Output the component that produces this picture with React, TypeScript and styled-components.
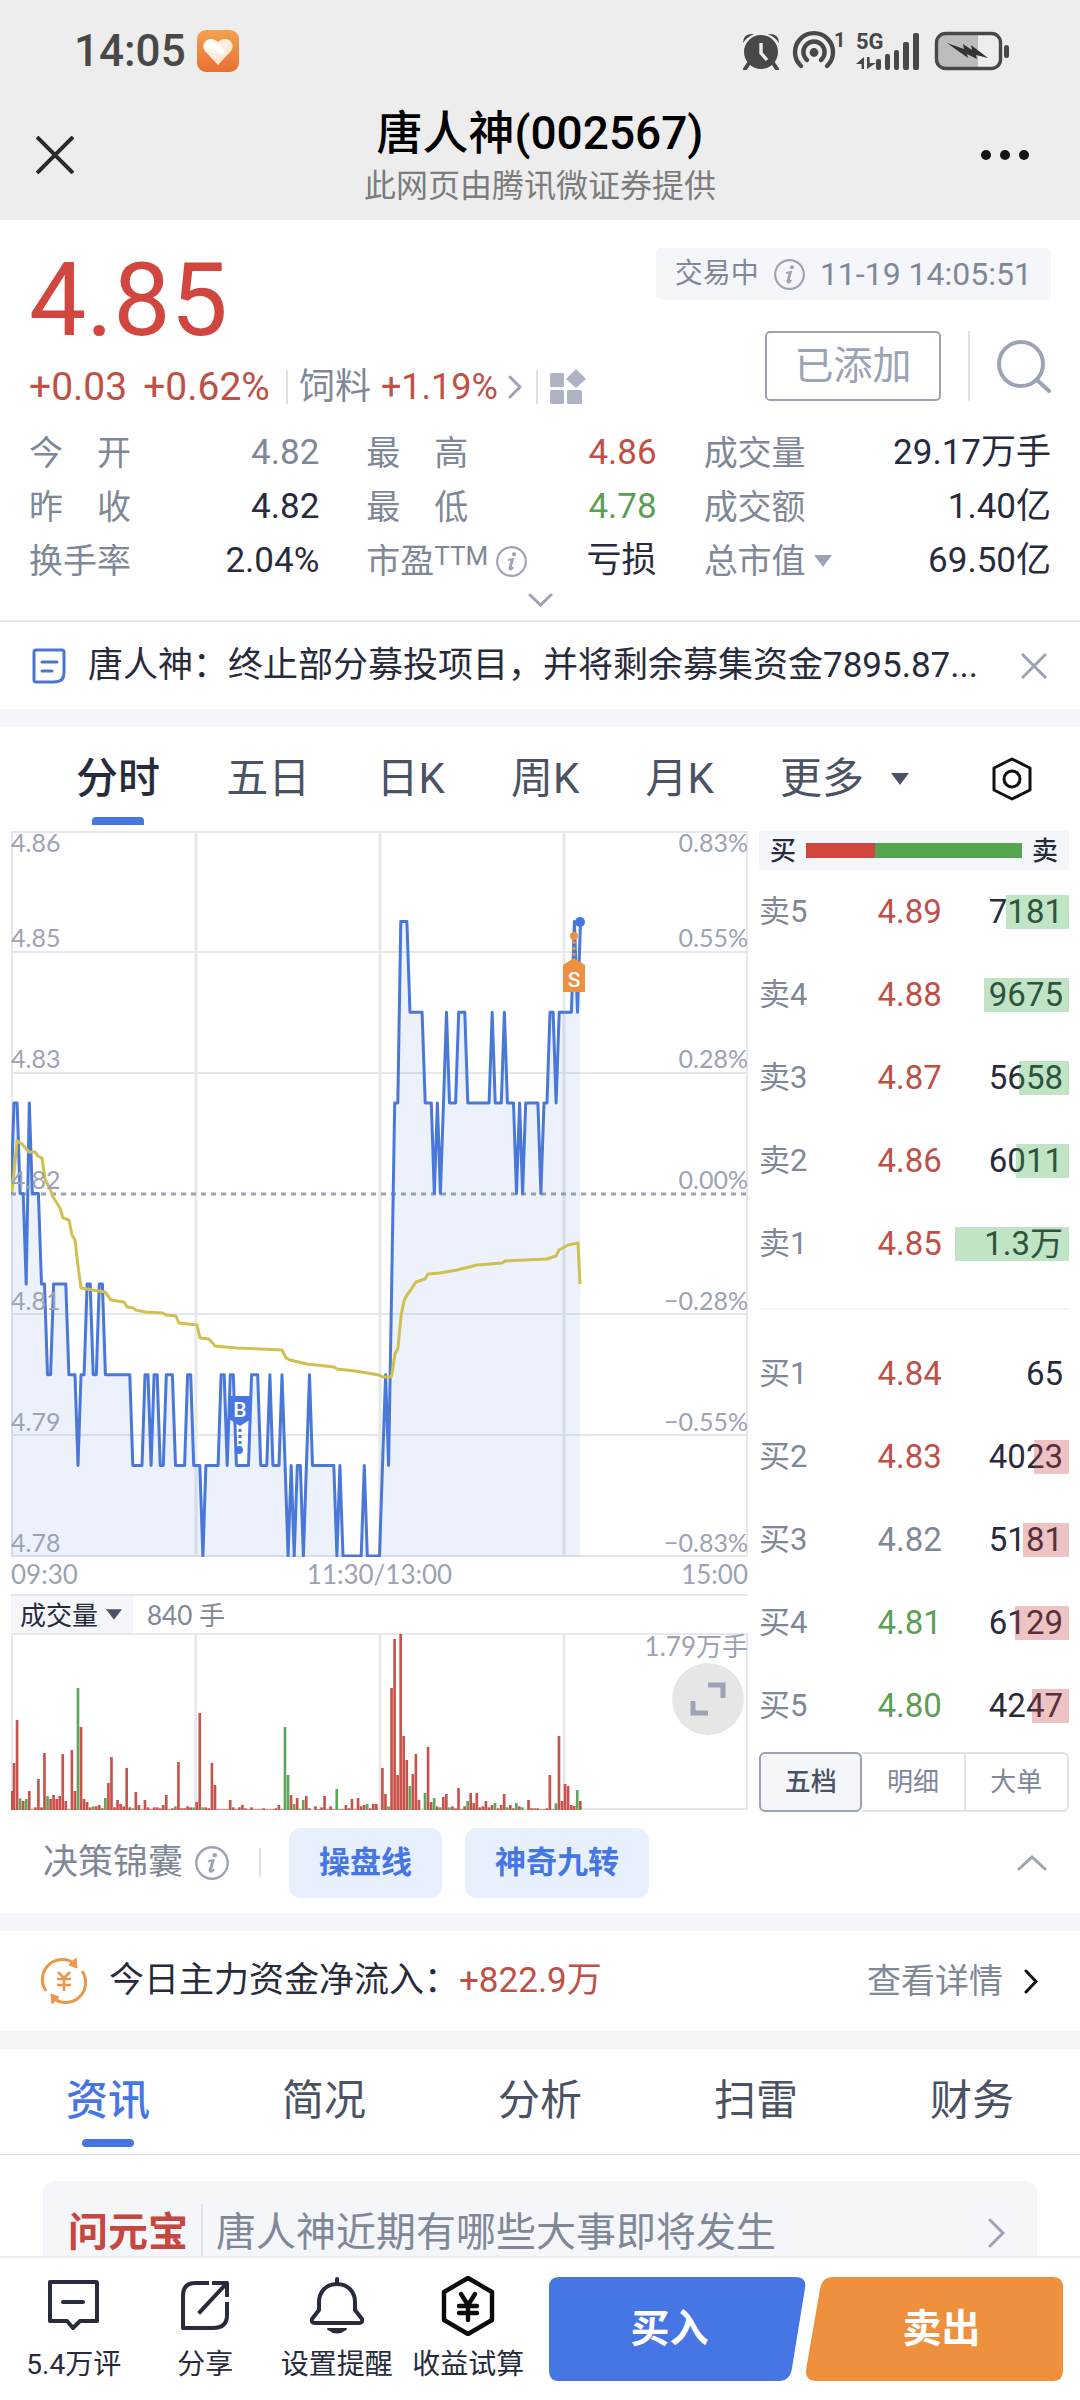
import React from "react";
import styled, { createGlobalStyle, css } from "styled-components";

const color = {
  ink: "#272b3c",
  slate: "#4a5263",
  muted: "#808898",
  soft: "#9ba3b4",
  line: "#e6e8ec",
  panel: "#f4f6fa",
  red: "#c05046",
  green: "#5a9f54",
  blue: "#4576e4",
  orange: "#ee903e",
};

const GlobalStyle = createGlobalStyle`
  *, *::before, *::after { box-sizing: border-box; }
  body {
    margin: 0;
    background: #fff;
    color: ${color.ink};
    font-family: Roboto, "Noto Sans CJK SC", sans-serif;
    font-size: 35px;
    line-height: 54px;
  }
  h1, p, dl, dd, dt { margin: 0; font-weight: 400; }
  button {
    margin: 0; padding: 0; border: 0; background: none;
    color: inherit; font: inherit; cursor: pointer;
  }
  a { color: inherit; text-decoration: none; }
  svg { display: block; flex: none; }
`;

/* ---------- page frame ---------- */

const Page = styled.div`
  height: 100vh;
  display: flex;
  flex-direction: column;
`;
const Scroll = styled.main`
  flex: 1;
  min-height: 0;
  overflow-y: auto;
  scrollbar-width: none;
`;
const Band = styled.div`
  height: 18px;
  background: ${color.panel};
`;
const Rule = styled.span<{ $h: number }>`
  flex: none;
  width: 2px;
  height: ${(p) => p.$h}px;
  background: #dfe1e7;
`;

/* ---------- top bars ---------- */

const TopBar = styled.header`
  flex: none;
  background: #ededed;
`;
const StatusBar = styled.div`
  height: 102px;
  padding: 0 70px 0 74px;
  display: flex;
  align-items: center;
  color: #484848;
`;
const Clock = styled.span`
  font-size: 44px;
  font-weight: 500;
  margin-right: 11px;
`;
const StatusIcons = styled.div`
  margin-left: auto;
  display: flex;
  align-items: center;
  gap: 10px;
`;
const TitleBar = styled.div`
  padding: 0 36px 12px;
  display: grid;
  grid-template-columns: 64px 1fr 64px;
  align-items: center;
  justify-items: start;
`;
const TitleText = styled.div`
  justify-self: center;
  text-align: center;
`;
const Title = styled.h1`
  color: #000;
  font-size: 46px;
  font-weight: 500;
  line-height: 62px;
`;
const Subtitle = styled.p`
  color: #7c7c7c;
  font-size: 32px;
  line-height: 44px;
`;
const IconButton = styled.button`
  display: flex;
  align-items: center;
  justify-content: center;
`;

/* ---------- quote ---------- */

const Quote = styled.section`
  padding: 28px 29px 0;
  border-bottom: 2px solid ${color.line};
`;
const QuoteHead = styled.div`
  display: flex;
  justify-content: space-between;
`;
const Price = styled.div`
  color: #d1473f;
  font-size: 102px;
  line-height: 104px;
`;
const Changes = styled.div`
  margin-top: 8px;
  height: 54px;
  display: flex;
  align-items: center;
`;
const Change = styled.span`
  color: ${color.red};
  font-size: 39px;
  margin-right: 16px;
`;
const Sector = styled.a`
  display: flex;
  align-items: center;
  gap: 10px;
  margin: 0 14px 0 11px;
  color: ${color.muted};
  font-size: 36px;
`;
const Up = styled.span`
  color: ${color.red};
`;
const QuoteSide = styled.div`
  display: flex;
  flex-direction: column;
  align-items: flex-end;
  gap: 31px;
`;
const TradeState = styled.div`
  height: 52px;
  padding: 0 19px;
  display: flex;
  align-items: center;
  gap: 15px;
  border-radius: 5px;
  background: ${color.panel};
  color: ${color.muted};
  font-size: 28px;
`;
const Stamp = styled.time`
  font-size: 32px;
`;
const Actions = styled.div`
  display: flex;
  align-items: center;
  gap: 27px;
`;
const AddedButton = styled.button`
  width: 176px;
  height: 70px;
  border: 2px solid ${color.soft};
  border-radius: 5px;
  color: ${color.soft};
  font-size: 39px;
`;
const Stats = styled.dl`
  margin-top: 12px;
  display: grid;
  grid-template-columns: 290fr 290fr 347fr;
  column-gap: 47px;
`;
const Stat = styled.div`
  display: flex;
  justify-content: space-between;
`;
const StatName = styled.dt`
  min-width: 102px;
  display: flex;
  align-items: center;
  justify-content: space-between;
  gap: 8px;
  color: ${color.muted};
  font-size: 34px;
`;
const Upper = styled.span`
  font-size: 26px;
  line-height: 34px;
  vertical-align: 8px;
`;
const StatValue = styled.dd<{ $tone?: string }>`
  color: ${(p) => p.$tone ?? color.ink};
`;
const Unfold = styled.button`
  width: 100%;
  height: 32px;
  display: flex;
  align-items: center;
  justify-content: center;
  padding-bottom: 8px;
`;

const News = styled.section`
  height: 87px;
  padding: 0 33px 0 32px;
  display: flex;
  align-items: center;
  gap: 22px;
`;
const NewsLink = styled.a`
  flex: 1;
  min-width: 0;
  white-space: nowrap;
  overflow: hidden;
`;

/* ---------- chart section ---------- */

const ChartTabs = styled.nav`
  height: 104px;
  padding: 0 48px 0 76px;
  display: flex;
  align-items: center;
  gap: 26px;
`;
const TabSet = styled.div`
  flex: 788;
  display: flex;
  justify-content: space-between;
`;
const TabTail = styled.div`
  flex: 142;
  display: flex;
  align-items: center;
  justify-content: space-between;
`;
const activeTab = css<{ $bar: string }>`
  font-weight: 500;
  &::after {
    content: "";
    position: absolute;
    left: 50%;
    bottom: 0;
    width: 52px;
    height: 8px;
    margin-left: -26px;
    border-radius: ${(p) => p.$bar};
    background: ${color.blue};
  }
`;
const Tab = styled.button<{ $on?: boolean; $bar: string; $tint: string }>`
  position: relative;
  height: 92px;
  color: ${(p) => (p.$on ? p.$tint : color.slate)};
  font-size: 42px;
  ${(p) => p.$on && activeTab}
`;
const Board = styled.div`
  padding: 0 11px;
  display: grid;
  grid-template-columns: 737fr 310fr;
  column-gap: 11px;
`;
const Plot = styled.div<{ $h: number }>`
  position: relative;
  height: ${(p) => p.$h}px;
  > svg { width: 100%; height: 100%; }
`;
const Scale = styled.div`
  position: absolute;
  inset: 0;
  display: grid;
  grid-template-rows: repeat(6, 1fr);
  color: ${color.soft};
  font: 25px/22px Lato, sans-serif;
`;
const ScaleStep = styled.div`
  display: flex;
  flex-direction: column;
  justify-content: flex-end;
  padding-bottom: 4px;
  &:first-child { justify-content: space-between; }
`;
const ScaleLine = styled.div`
  display: flex;
  justify-content: space-between;
`;
const TimeAxis = styled.div`
  height: 39px;
  display: flex;
  justify-content: space-between;
  border-bottom: 2px solid ${color.line};
  color: ${color.soft};
  font: 26px/34px Lato, sans-serif;
`;
const VolumeHead = styled.div`
  height: 37px;
  display: flex;
  align-items: center;
  gap: 14px;
  color: ${color.muted};
  font: 26px/34px Lato, "Noto Sans CJK SC", sans-serif;
`;
const VolumePick = styled.button`
  height: 37px;
  padding: 0 11px 0 9px;
  display: flex;
  align-items: center;
  gap: 8px;
  background: ${color.panel};
  color: ${color.ink};
`;
const VolumePeak = styled.span`
  position: absolute;
  top: 0;
  right: 0;
  color: ${color.soft};
  font: 26px/26px Lato, "Noto Sans CJK SC", sans-serif;
`;
const ExpandButton = styled(IconButton)`
  position: absolute;
  top: 30px;
  right: 4px;
  width: 72px;
  height: 72px;
  border-radius: 50%;
  background: #e6e6e6;
`;

/* ---------- order book ---------- */

const Ratio = styled.div`
  height: 39px;
  padding: 0 11px;
  display: flex;
  align-items: center;
  gap: 10px;
  background: ${color.panel};
  font-size: 26px;
  font-weight: 500;
`;
const RatioBar = styled.div`
  flex: 1;
  height: 15px;
  display: flex;
`;
const RatioPart = styled.span<{ $share: number; $fill: string }>`
  flex: ${(p) => p.$share};
  background: ${(p) => p.$fill};
`;
const Levels = styled.table`
  width: 100%;
  table-layout: fixed;
  border-collapse: collapse;
  margin-bottom: 23px;
  & + & {
    border-top: 2px solid ${color.panel};
    margin-bottom: 5px;
  }
  & + & tr:first-child > * { padding-top: 23px; height: 106px; }
`;
const LevelName = styled.th`
  width: 25%;
  height: 83px;
  padding: 0;
  text-align: left;
  font-weight: 400;
  font-size: 31px;
  line-height: 34px;
  color: ${color.muted};
`;
const LevelPrice = styled.td<{ $tone: string }>`
  width: 34%;
  padding: 0;
  text-align: right;
  font-size: 33px;
  line-height: 34px;
  color: ${(p) => p.$tone};
`;
const LevelSize = styled.td`
  padding: 0;
  font-size: 33px;
  line-height: 34px;
  text-align: right;
`;
const SizeCell = styled.div`
  position: relative;
  padding-right: 6px;
`;
const Depth = styled.span<{ $fill: string }>`
  position: absolute;
  top: 0;
  right: 0;
  height: 34px;
  background: ${(p) => p.$fill};
`;
const BookTabs = styled.div`
  display: grid;
  grid-template-columns: repeat(3, 1fr);
`;
const BookTab = styled.button<{ $on?: boolean }>`
  height: 60px;
  border: 2px solid ${(p) => (p.$on ? color.soft : "#e1e3e8")};
  border-left-width: ${(p) => (p.$on ? 2 : 0)}px;
  border-radius: ${(p) => (p.$on ? "6px" : "0")};
  background: ${(p) => (p.$on ? color.panel : "none")};
  color: ${(p) => (p.$on ? color.slate : color.muted)};
  font-size: 26px;
  font-weight: ${(p) => (p.$on ? 500 : 400)};
  line-height: 54px;
  &:last-child { border-radius: 0 6px 6px 0; }
`;

/* ---------- lower rows ---------- */

const Toolkit = styled.div`
  height: 101px;
  padding: 0 33px 0 43px;
  display: flex;
  align-items: center;
`;
const ToolkitName = styled.span`
  margin-right: 12px;
  color: ${color.muted};
`;
const ToolkitPills = styled.div`
  margin: 0 auto 0 28px;
  display: flex;
  gap: 23px;
`;
const Pill = styled.button`
  height: 70px;
  padding: 0 30px;
  border-radius: 12px;
  background: #e8effd;
  color: ${color.blue};
  font-size: 31px;
  font-weight: 700;
`;
const Gap = styled.span`
  width: 30px;
`;
const FlowRow = styled.a`
  height: 100px;
  padding: 0 42px 0 40px;
  display: flex;
  align-items: center;
  gap: 21px;
`;
const FlowMore = styled.span`
  margin-left: auto;
  color: ${color.muted};
  font-size: 34px;
`;
const InfoTabs = styled.nav`
  height: 106px;
  padding-bottom: 2px;
  display: grid;
  grid-template-columns: repeat(5, 1fr);
  align-items: center;
  justify-items: center;
  border-bottom: 1px solid #dcdee3;
`;
const AskCard = styled.a`
  margin: 26px 43px;
  height: 104px;
  padding: 0 32px 0 25px;
  display: flex;
  align-items: center;
  gap: 13px;
  border-radius: 12px;
  background: ${color.panel};
  color: ${color.muted};
  font-size: 40px;
`;
const AskBrand = styled.strong`
  color: #c6473f;
  font-weight: 700;
`;
const AskText = styled.span`
  flex: 1;
`;

/* ---------- bottom bar ---------- */

const BottomBar = styled.footer`
  flex: none;
  height: 144px;
  padding: 0 17px 0 8px;
  display: flex;
  gap: 15px;
  border-top: 2px solid #e9ebf0;
  background: #fff;
`;
const BottomTools = styled.div`
  flex: 526;
  display: grid;
  grid-template-columns: repeat(4, 1fr);
`;
const BottomTool = styled.button`
  padding-top: 18px;
  display: flex;
  flex-direction: column;
  align-items: center;
  gap: 9px;
  font-size: 28px;
  line-height: 40px;
  white-space: nowrap;
`;
const TradeButtons = styled.div`
  flex: 514;
  padding-top: 19px;
  display: grid;
  grid-template-columns: 1fr 1fr;
`;
const TradeButton = styled.button<{ $side: "buy" | "sell" }>`
  position: relative;
  height: 104px;
  padding: ${(p) => (p.$side === "buy" ? "0 16px 0 0" : "0 0 0 14px")};
  color: #fff;
  font-size: 39px;
  font-weight: 700;
  > svg { position: absolute; inset: 0; width: 100%; height: 100%; }
  > span { position: relative; }
`;

/* ---------- icons ---------- */

type ChevronProps = { w: number; h: number; dir: "right" | "down" | "up"; stroke?: string; weight?: number };
const Chevron = ({ w, h, dir, stroke = color.soft, weight = 3 }: ChevronProps) => {
  const d = {
    right: `M2 2 L${w - 2} ${h / 2} L2 ${h - 2}`,
    down: `M2 2 L${w / 2} ${h - 2} L${w - 2} 2`,
    up: `M2 ${h - 2} L${w / 2} 2 L${w - 2} ${h - 2}`,
  }[dir];
  return (
    <svg width={w} height={h} fill="none" stroke={stroke} strokeWidth={weight} strokeLinecap="round">
      <path d={d} />
    </svg>
  );
};

const Caret = ({ w, h, fill }: { w: number; h: number; fill: string }) => (
  <svg width={w} height={h} viewBox="0 0 18 12" fill={fill}>
    <path d="M0 0H18L9 12Z" />
  </svg>
);

const Cross = ({ size, stroke, weight }: { size: number; stroke: string; weight: number }) => (
  <svg width={size} height={size} viewBox={`0 0 ${size} ${size}`} stroke={stroke} strokeWidth={weight}>
    <path d={`M1 1 L${size - 1} ${size - 1} M${size - 1} 1 L1 ${size - 1}`} />
  </svg>
);

const Info = ({ size }: { size: number }) => (
  <svg width={size} height={size} viewBox="0 0 32 32" fill="none" stroke={color.soft}>
    <circle cx="16" cy="16" r="14.8" strokeWidth="2.2" />
    <circle cx="18.6" cy="8.6" r="2.1" fill={color.soft} stroke="none" />
    <path d="M12.4 14.4 L17.4 13.4 L14.4 23.4 Q14.2 24.8 16 23.8 L18 21.8" strokeWidth="2" />
    <path d="M16.8 14 L14 24" strokeWidth="2.8" />
  </svg>
);

const HeartBadge = () => (
  <svg width="42" height="42" viewBox="0 0 42 42">
    <defs>
      <linearGradient id="badge" x1="0" y1="0" x2="0" y2="1">
        <stop offset="0" stopColor="#f0a34e" />
        <stop offset="1" stopColor="#e96f33" />
      </linearGradient>
      <linearGradient id="heart" x1="0" y1="0" x2="1" y2="1">
        <stop offset="0" stopColor="#fff" />
        <stop offset="1" stopColor="#fbdcc0" />
      </linearGradient>
    </defs>
    <rect width="42" height="42" rx="9" fill="url(#badge)" />
    <path d="M21 35 L8 21 C2 13 13 4 21 12 C29 4 40 13 34 21 Z" fill="url(#heart)" />
    <path d="M11 15 Q15 14 24 21" stroke="#fff" strokeWidth="7" strokeLinecap="round" fill="none" />
  </svg>
);

const AlarmIcon = () => (
  <svg width="38" height="38" viewBox="0 0 38 38" fill="#484848">
    <circle cx="19" cy="20" r="17" />
    <path d="M1 11 Q1 1 12 2 Q5 5 1 11Z M37 11 Q37 1 26 2 Q33 5 37 11Z" />
    <path d="M7 31 L3 37 M31 31 L35 37" stroke="#484848" strokeWidth="4" strokeLinecap="round" />
    <path d="M19 11 V21 L25 28" fill="none" stroke="#ededed" strokeWidth="3.4" />
  </svg>
);

const HotspotIcon = () => (
  <svg width="56" height="50" viewBox="0 -5 56 50" fill="none" stroke="#484848" strokeWidth="4.4" strokeLinecap="round">
    <path d="M11 35 A19 19 0 1 1 37 35" />
    <path d="M17 29 A10.6 10.6 0 1 1 31 29" />
    <circle cx="24" cy="21.5" r="4.4" fill="#484848" stroke="none" />
    <text x="44" y="16" fontSize="20" fontWeight="700" fill="#484848" stroke="none">1</text>
  </svg>
);

const SignalIcon = () => (
  <svg width="68" height="50" viewBox="0 -5 68 50" fill="#484848">
    <text x="0" y="18" fontSize="22" fontWeight="700">5G</text>
    <path d="M8 26 V38 H5.600 V33 H0 Z M11 26 V38 L20 32 H13.600 V26Z" />
    <rect x="20" y="28" width="5" height="11" rx="2" />
    <rect x="29" y="23" width="5" height="16" rx="2" />
    <rect x="38" y="19" width="5" height="20" rx="2" />
    <rect x="47" y="11" width="6" height="28" rx="2" />
    <rect x="57" y="2" width="6" height="37" rx="2" />
  </svg>
);

const BatteryIcon = () => (
  <svg width="76" height="40" viewBox="0 0 76 40">
    <path d="M10 3 H44 V37 H10 Q3 37 3 30 V10 Q3 3 10 3Z" fill="#bdbdbd" />
    <rect x="2.500" y="2.500" width="64" height="35" rx="9" fill="none" stroke="#484848" strokeWidth="3.4" />
    <rect x="70" y="14" width="5" height="13" rx="2.5" fill="#484848" />
    <path d="M13 12 L30 18 L29 13 L38 19 L37 14 L54 27 L42 24 L43 28 L33 23 L34 27 Z" fill="#333" />
  </svg>
);

const BlocksIcon = () => (
  <svg width="37" height="36" viewBox="0 0 37 36" fill="#aeb4c3">
    <rect x="1" y="4" width="14" height="14" rx="1.500" />
    <rect x="1" y="21" width="14" height="14" rx="1.500" />
    <rect x="18" y="21" width="15" height="14" rx="1.500" />
    <path d="M27 0 L37 10 L27 19 L17 10Z" />
  </svg>
);

const SearchIcon = () => (
  <svg width="54" height="54" viewBox="0 0 54 54" fill="none" stroke={color.soft} strokeWidth="4" strokeLinecap="round">
    <circle cx="24" cy="25" r="22" />
    <path d="M40 41 L52 52" />
  </svg>
);

const NoteIcon = () => (
  <svg width="34" height="36" viewBox="0 0 34 36" fill="none" stroke="#4a76cf" strokeWidth="3" strokeLinecap="round">
    <path d="M4 2 H30 Q32 2 32 4 V25 Q32 34 22 34 H4 Q2 34 2 32 V4 Q2 2 4 2Z" />
    <path d="M10 14 H25 M10 23 H20" />
  </svg>
);

const HexSettings = () => (
  <svg width="40" height="44" viewBox="0 0 40 44" fill="none" stroke="#111" strokeWidth="3" strokeLinejoin="round">
    <path d="M20 2 L38 11 V33 L20 42 L2 33 V11Z" />
    <circle cx="20" cy="22" r="8" />
  </svg>
);

const ExpandIcon = () => (
  <svg width="36" height="36" viewBox="0 0 36 36" fill="none" stroke={color.soft} strokeWidth="5">
    <path d="M18 4 H33 V17 M3 20 V32 H18" />
  </svg>
);

const FlowIcon = () => (
  <svg width="48" height="50" viewBox="0 0 48 50" fill="none" stroke="#e8984a" strokeWidth="3">
    <path d="M6 35 A20 20 0 0 1 35 8 M42 15 A20 20 0 0 1 13 42" />
    <path d="M29 9 L36 2 L37 12Z M19 41 L12 48 L11 38Z" fill="#e8984a" strokeWidth="1" />
    <path d="M18 16 L24 22 L30 16 M17 23 H31 M17 29 H31 M24 22 V35" strokeWidth="2.6" />
  </svg>
);

const CommentIcon = () => (
  <svg width="60" height="60" viewBox="0 0 60 60" fill="none" stroke={color.ink} strokeWidth="4" strokeLinejoin="round" strokeLinecap="round">
    <path d="M6 6 H52 Q53 6 53 7 V45 H36 L29 52 L23 45 H6 Z" />
    <path d="M19 26 H39" />
  </svg>
);

const ShareIcon = () => (
  <svg width="60" height="60" viewBox="0 0 60 60" fill="none" stroke={color.ink} strokeWidth="4" strokeLinejoin="round">
    <path d="M34 7 H20 Q8 7 8 20 V52 H38 Q52 52 52 39 V26" />
    <path d="M39 7 H52 V19 M51 8 L25 36" strokeLinecap="square" />
  </svg>
);

const BellIcon = () => (
  <svg width="60" height="60" viewBox="0 0 60 60" fill="none" stroke={color.ink} strokeWidth="4" strokeLinejoin="round" strokeLinecap="round">
    <path d="M30 3 V7 M30 8 C18 8 12 17 12 26 V34 L5 43 Q4 47 8 47 H52 Q56 47 55 43 L48 34 V26 C48 17 42 8 30 8Z" />
    <path d="M21 53 H39 Q30 60 21 53Z" fill={color.ink} strokeWidth="2" />
  </svg>
);

const YuanIcon = () => (
  <svg width="60" height="60" viewBox="0 0 60 60" fill="none" stroke="#0c0c10" strokeWidth="4.4" strokeLinejoin="round" strokeLinecap="round">
    <path d="M30 2 L54 16 V44 L30 58 L6 44 V16Z" />
    <path d="M23 18 L30 29 L37 18 M21 30 H39 M21 37 H39 M30 29 V44" />
  </svg>
);

/* ---------- chart data ---------- */

/* one entry per run of minutes: [last price in cents above 4.00, minutes] */
const priceRuns: [number, number][] = [
  [82, 1], [83, 2], [82, 2], [81, 1], [83, 1], [82, 3], [81, 2], [80, 2], [81, 5], [80, 3], [79, 1], [80, 2],
  [81, 2], [80, 2], [81, 2], [80, 9], [79, 4], [80, 2], [79, 1], [80, 2], [79, 2], [80, 3], [79, 4], [80, 2],
  [79, 3], [78, 1], [79, 5], [80, 2], [79, 1], [80, 2], [79, 5], [80, 3], [79, 3], [80, 1], [79, 3], [80, 1],
  [79, 1], [78, 1], [79, 1], [78, 1], [79, 2], [78, 1], [79, 1], [80, 1], [79, 8], [78, 1], [79, 1], [78, 7],
  [79, 1], [78, 5], [79, 1], [80, 1], [79, 1], [81, 1], [83, 2], [85, 3], [84, 5], [83, 3], [82, 1], [83, 1],
  [82, 1], [83, 1], [84, 1], [83, 3], [84, 3], [83, 8], [84, 1], [83, 3], [84, 1], [83, 3], [82, 1], [83, 1],
  [82, 1], [83, 5], [82, 1], [83, 2], [84, 2], [83, 1], [84, 5], [85, 1], [84, 1], [85, 1],
];
const W = 737;
const H = 726;
const stepX = W / 242;
const prices = priceRuns.flatMap(([v, n]) => Array<number>(n).fill(v));
const pricePoints = prices.map((v, i) => `${(i * stepX).toFixed(1)},${(((86 - v) * (H - 1)) / 8).toFixed(1)}`).join(" ");
const lastX = (prices.length - 1) * stepX;

const averagePoints =
  "1,361 6,310 11,313 18,321 24,321 27,325 31,327 34,348 39,358 42,366 49,377 52,387 58,389 61,404 64,409 67,435 " +
  "70,457 81,459 94,461 100,469 113,471 116,476 122,477 125,479 134,481 152,482 155,484 165,485 168,492 186,494 " +
  "189,507 198,508 204,515 226,517 271,519 275,527 279,529 296,533 323,536 326,538 344,540 368,544 372,546 380,546 " +
  "381,543 384,523 387,517 390,485 393,470 396,464 399,460 405,451 414,448 417,443 429,442 446,439 466,434 491,432 " +
  "494,430 536,428 545,425 548,419 557,414 567,412 569,453";

/* traded volume per minute in chart units, negative where the price fell */
const volumes = [
  57, 141, 270, -35, 27, -33, 57, 2, 8, 93, 8, 171, -42, 33, 45, 33, 42, 168, 27, -2, 180, 57, -366, 249, 33, 24, 8,
  -11, 11, 15, 5, -36, 81, 159, 8, 30, 18, 11, 126, 8, -5, 54, 15, 2, 30, 8, 2, 8, 8, 5, 15, 45, 2, 5, -11, 144, 5, 5,
  11, 8, -8, 24, 291, -8, 8, 5, 141, 75, 2, 2, 2, 2, 30, 8, 2, 8, 15, 5, 2, 8, 2, 2, 2, 5, 2, 2, 2, 5, 15, 2, -249,
  -105, 45, -18, 36, 2, -30, 42, 5, 0, 11, 2, 8, 42, 2, 11, 2, -63, 2, 2, 15, 5, 33, 2, 36, 11, 15, -18, 5, 18, 18, 0,
  126, 48, -11, 366, 513, 105, 528, 222, 150, -72, 108, 168, 30, 0, -51, 189, 24, -36, 11, -8, 39, 48, -8, 11, 5, 66,
  2, 11, -27, 51, 21, 51, 8, 11, 27, 8, 15, -21, 5, 15, 48, -8, 15, 5, -21, 11, -8, 0, 30, 5, 5, 5, -2, 2, 5, 105, 2,
  -20, 222, 27, 78, 72, 15, 12, -60, 27,
];

const scaleRows = [
  ["4.85", "0.55%"],
  ["4.83", "0.28%"],
  ["4.82", "0.00%"],
  ["4.81", "−0.28%"],
  ["4.79", "−0.55%"],
  ["4.78", "−0.83%"],
];

const PriceChart = () => (
  <svg viewBox={`0 0 ${W} ${H}`} preserveAspectRatio="none" role="img" aria-label="分时走势">
    <g stroke={color.line} strokeWidth="2" fill="none">
      <path d="M0 1H737 M0 121H737 M0 242H737 M0 483H737 M0 604H737 M0 725H737 M1 0V726 M736 0V726" />
      <path d="M185 0V726 M369 0V726 M553 0V726" strokeWidth="3" />
    </g>
    <path d="M0 363H737" stroke={color.soft} strokeWidth="3" strokeDasharray="5 5" />
    <polygon points={`0,${H} ${pricePoints} ${lastX},${H}`} fill={color.blue} fillOpacity="0.1" />
    <polyline points={pricePoints} fill="none" stroke="#4a78d8" strokeWidth="3" strokeLinejoin="round" />
    <polyline points={averagePoints} fill="none" stroke="#d1c04f" strokeWidth="3" strokeLinejoin="round" />
    <g>
      <path d="M218 567 Q218 565 220 565 H238 Q240 565 240 567 V588 L229 595 L218 588Z" fill={color.blue} />
      <text x="229" y="586" textAnchor="middle" fontSize="21" fontWeight="500" fill="#fff">B</text>
      <path d="M229 598V616" stroke={color.blue} strokeWidth="3" strokeDasharray="3 3" />
      <circle cx="228" cy="619" r="4" fill={color.blue} />
    </g>
    <g>
      <circle cx="569" cy="91" r="5" fill={color.blue} />
      <circle cx="563" cy="105" r="4" fill={color.orange} />
      <path d="M563 110V128" stroke={color.orange} strokeWidth="3" strokeDasharray="3 3" />
      <path d="M552 134 L563 127 L574 134 V161 H552Z" fill={color.orange} />
      <text x="563" y="156" textAnchor="middle" fontSize="21" fontWeight="500" fill="#fff">S</text>
    </g>
  </svg>
);

const VolumeChart = () => (
  <svg viewBox="0 0 2211 531" preserveAspectRatio="none" role="img" aria-label="成交量">
    <path d="M0 3H2211 M0 528H2211 M3 0V531 M2208 0V531" stroke={color.line} strokeWidth="6" fill="none" />
    <path d="M554 0V531 M1107 0V531 M1659 0V531" stroke={color.line} strokeWidth="8" fill="none" />
    {volumes.map((v, i) => (
      <rect
        key={i}
        x={i * 9.133 - (i === 0 ? 0 : 4)}
        y={531 - Math.abs(v)}
        width="8"
        height={Math.abs(v)}
        fill={v < 0 ? "#5ba85a" : "#c9534a"}
      />
    ))}
  </svg>
);

/* ---------- order book data ---------- */

type Level = { name: string; price: string; size: number; label?: string; tone: string };
const asks: Level[] = [
  { name: "卖5", price: "4.89", size: 7181, tone: color.red },
  { name: "卖4", price: "4.88", size: 9675, tone: color.red },
  { name: "卖3", price: "4.87", size: 5658, tone: color.red },
  { name: "卖2", price: "4.86", size: 6011, tone: color.red },
  { name: "卖1", price: "4.85", size: 13000, label: "1.3万", tone: color.red },
];
const bids: Level[] = [
  { name: "买1", price: "4.84", size: 65, tone: color.red },
  { name: "买2", price: "4.83", size: 4023, tone: color.red },
  { name: "买3", price: "4.82", size: 5181, tone: color.muted },
  { name: "买4", price: "4.81", size: 6129, tone: color.green },
  { name: "买5", price: "4.80", size: 4247, tone: color.green },
];

const LevelTable = ({ rows, fill, label }: { rows: Level[]; fill: string; label: string }) => (
  <Levels aria-label={label}>
    <tbody>
      {rows.map((r) => (
        <tr key={r.name}>
          <LevelName scope="row">{r.name}</LevelName>
          <LevelPrice $tone={r.tone}>{r.price}</LevelPrice>
          <LevelSize>
            <SizeCell>
              {r.label ?? r.size}
              <Depth $fill={fill} style={{ width: `${r.size > 1000 ? (r.size / 13000) * 90 : 0}%` }} />
            </SizeCell>
          </LevelSize>
        </tr>
      ))}
    </tbody>
  </Levels>
);

const stats: { name: React.ReactNode; value: string; tone?: string }[] = [
  { name: <><span>今</span><span>开</span></>, value: "4.82", tone: color.muted },
  { name: <><span>最</span><span>高</span></>, value: "4.86", tone: color.red },
  { name: "成交量", value: "29.17万手" },
  { name: <><span>昨</span><span>收</span></>, value: "4.82" },
  { name: <><span>最</span><span>低</span></>, value: "4.78", tone: color.green },
  { name: "成交额", value: "1.40亿" },
  { name: "换手率", value: "2.04%" },
  { name: <><span>市盈<Upper>TTM</Upper></span><Info size={31} /></>, value: "亏损" },
  { name: <><span>总市值</span><Caret w={18} h={12} fill={color.soft} /></>, value: "69.50亿" },
];

export default function App() {
  return (
    <>
      <GlobalStyle />
      <Page>
        <TopBar>
          <StatusBar>
            <Clock>14:05</Clock>
            <HeartBadge />
            <StatusIcons>
              <AlarmIcon />
              <HotspotIcon />
              <SignalIcon />
              <BatteryIcon />
            </StatusIcons>
          </StatusBar>
          <TitleBar>
            <IconButton aria-label="关闭">
              <Cross size={38} stroke="#2a2a2a" weight={4} />
            </IconButton>
            <TitleText>
              <Title>唐人神(002567)</Title>
              <Subtitle>此网页由腾讯微证券提供</Subtitle>
            </TitleText>
            <IconButton aria-label="更多">
              <svg width="50" height="12" fill="#161616">
                <circle cx="6" cy="6" r="5" />
                <circle cx="25" cy="6" r="5" />
                <circle cx="44" cy="6" r="5" />
              </svg>
            </IconButton>
          </TitleBar>
        </TopBar>

        <Scroll>
          <Quote>
            <QuoteHead>
              <div>
                <Price>4.85</Price>
                <Changes>
                  <Change>+0.03</Change>
                  <Change>+0.62%</Change>
                  <Rule $h={34} />
                  <Sector href="#sector">
                    饲料 <Up>+1.19%</Up>
                    <Chevron w={14} h={24} dir="right" />
                  </Sector>
                  <Rule $h={34} />
                  <Sector href="#blocks" aria-label="板块">
                    <BlocksIcon />
                  </Sector>
                </Changes>
              </div>
              <QuoteSide>
                <TradeState>
                  交易中
                  <Info size={31} />
                  <Stamp>11-19 14:05:51</Stamp>
                </TradeState>
                <Actions>
                  <AddedButton>已添加</AddedButton>
                  <Rule $h={70} />
                  <IconButton aria-label="搜索">
                    <SearchIcon />
                  </IconButton>
                </Actions>
              </QuoteSide>
            </QuoteHead>
            <Stats>
              {stats.map((s, i) => (
                <Stat key={i}>
                  <StatName>{s.name}</StatName>
                  <StatValue $tone={s.tone}>{s.value}</StatValue>
                </Stat>
              ))}
            </Stats>
            <Unfold aria-label="展开">
              <Chevron w={25} h={14} dir="down" />
            </Unfold>
          </Quote>

          <News>
            <NoteIcon />
            <NewsLink href="#news">唐人神：终止部分募投项目，并将剩余募集资金7895.87...</NewsLink>
            <IconButton aria-label="关闭公告">
              <Cross size={26} stroke={color.soft} weight={3} />
            </IconButton>
          </News>
          <Band />

          <ChartTabs>
            <TabSet>
              {["分时", "五日", "日K", "周K", "月K", "更多"].map((t, i) => (
                <Tab key={t} $on={i === 0} $bar="4px 4px 0 0" $tint={color.ink}>
                  {t}
                </Tab>
              ))}
            </TabSet>
            <TabTail>
              <Caret w={20} h={12} fill={color.slate} />
              <IconButton aria-label="设置">
                <HexSettings />
              </IconButton>
            </TabTail>
          </ChartTabs>

          <Board>
            <div>
              <Plot $h={726}>
                <PriceChart />
                <Scale>
                  {scaleRows.map(([l, r], i) => (
                    <ScaleStep key={l}>
                      {i === 0 && (
                        <ScaleLine>
                          <span>4.86</span>
                          <span>0.83%</span>
                        </ScaleLine>
                      )}
                      <ScaleLine>
                        <span>{l}</span>
                        <span>{r}</span>
                      </ScaleLine>
                    </ScaleStep>
                  ))}
                </Scale>
              </Plot>
              <TimeAxis>
                <span>09:30</span>
                <span>11:30/13:00</span>
                <span>15:00</span>
              </TimeAxis>
              <VolumeHead>
                <VolumePick>
                  成交量 <Caret w={16} h={11} fill={color.slate} />
                </VolumePick>
                840 手
              </VolumeHead>
              <Plot $h={177}>
                <VolumeChart />
                <VolumePeak>1.79万手</VolumePeak>
                <ExpandButton aria-label="全屏">
                  <ExpandIcon />
                </ExpandButton>
              </Plot>
            </div>

            <div>
              <Ratio>
                买
                <RatioBar>
                  <RatioPart $share={69} $fill="#d1473f" />
                  <RatioPart $share={147} $fill="#52a74e" />
                </RatioBar>
                卖
              </Ratio>
              <LevelTable rows={asks} fill="rgba(62, 170, 76, 0.32)" label="卖盘" />
              <LevelTable rows={bids} fill="rgba(200, 62, 62, 0.31)" label="买盘" />
              <BookTabs>
                <BookTab $on>五档</BookTab>
                <BookTab>明细</BookTab>
                <BookTab>大单</BookTab>
              </BookTabs>
            </div>
          </Board>

          <Toolkit>
            <ToolkitName>决策锦囊</ToolkitName>
            <Info size={34} />
            <Gap />
            <Rule $h={29} />
            <ToolkitPills>
              <Pill>操盘线</Pill>
              <Pill>神奇九转</Pill>
            </ToolkitPills>
            <IconButton aria-label="收起">
              <Chevron w={30} h={16} dir="up" />
            </IconButton>
          </Toolkit>
          <Band />

          <FlowRow href="#flow">
            <FlowIcon />
            <span>
              今日主力资金净流入：<Up>+822.9万</Up>
            </span>
            <FlowMore>查看详情</FlowMore>
            <Chevron w={14} h={25} dir="right" stroke="#111" />
          </FlowRow>
          <Band />

          <InfoTabs>
            {["资讯", "简况", "分析", "扫雷", "财务"].map((t, i) => (
              <Tab key={t} $on={i === 0} $bar="4px" $tint={color.blue}>
                {t}
              </Tab>
            ))}
          </InfoTabs>
          <AskCard href="#ask">
            <AskBrand>问元宝</AskBrand>
            <Rule $h={58} />
            <AskText>唐人神近期有哪些大事即将发生</AskText>
            <Chevron w={17} h={30} dir="right" />
          </AskCard>
        </Scroll>

        <BottomBar>
          <BottomTools>
            <BottomTool><CommentIcon />5.4万评</BottomTool>
            <BottomTool><ShareIcon />分享</BottomTool>
            <BottomTool><BellIcon />设置提醒</BottomTool>
            <BottomTool><YuanIcon />收益试算</BottomTool>
          </BottomTools>
          <TradeButtons>
            <TradeButton $side="buy">
              <svg viewBox="0 0 257 104" preserveAspectRatio="none" fill={color.blue}>
                <path d="M10 0H246Q258 0 256 11L243 91Q241 104 230 104H10Q0 104 0 94V10Q0 0 10 0Z" />
              </svg>
              <span>买入</span>
            </TradeButton>
            <TradeButton $side="sell">
              <svg viewBox="0 0 257 104" preserveAspectRatio="none" fill={color.orange}>
                <path d="M27 0H247Q257 0 257 10V94Q257 104 247 104H10Q-1 104 0 93L14 12Q16 0 27 0Z" />
              </svg>
              <span>卖出</span>
            </TradeButton>
          </TradeButtons>
        </BottomBar>
      </Page>
    </>
  );
}
